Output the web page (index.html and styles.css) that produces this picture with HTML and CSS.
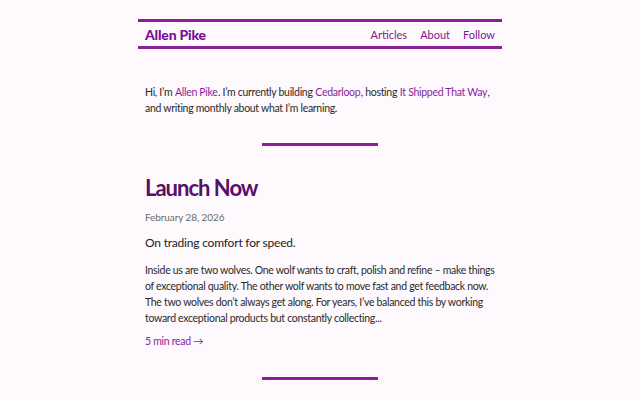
FILE: index.html
```html
<!DOCTYPE html>
<html>
<head>
<meta charset="utf-8">
<link rel="stylesheet" href="styles.css">
</head>
<body>
<div class="page">
  <header class="site-header">
    <a class="brand" href="#">Allen Pike</a>
    <nav class="nav">
      <a href="#">Articles</a>
      <a href="#">About</a>
      <a href="#">Follow</a>
    </nav>
  </header>
  <p class="intro">Hi, I’m <a href="#">Allen Pike</a>. I’m currently building <a href="#">Cedarloop</a>, hosting <a href="#">It Shipped That Way</a>, and writing monthly about what I’m learning.</p>
  <hr class="divider">
  <article class="post">
    <h1 class="title">Launch Now</h1>
    <div class="date">February 28, 2026</div>
    <p class="subtitle">On trading comfort for speed.</p>
    <p class="excerpt">Inside us are two wolves. One wolf wants to craft, polish and refine – make things of exceptional quality. The other wolf wants to move fast and get feedback now. The two wolves don’t always get along. For years, I’ve balanced this by working toward exceptional products but constantly collecting...</p>
    <a class="more" href="#">5 min read →</a>
  </article>
  <hr class="divider divider-end">
</div>
</body>
</html>
```
FILE: styles.css
```css
html, body {
  margin: 0;
  padding: 0;
  background: #fdf9fc;
}
body {
  font-family: "Lato", "Open Sans", sans-serif;
  color: #2a2a2a;
}
a {
  color: #8a1e9c;
  text-decoration: none;
}
.page {
  width: 364px;
  margin: 0 auto;
  padding-top: 19px;
}
.site-header {
  display: flex;
  justify-content: space-between;
  align-items: center;
  height: 24px;
  border-top: 3px solid #8e1a9e;
  border-bottom: 3px solid #8e1a9e;
  padding: 0 7px;
}
.brand {
  font-weight: 900;
  font-size: 14px;
  letter-spacing: -0.2px;
  color: #7a0f98;
}
.nav {
  display: flex;
  gap: 13px;
  font-size: 11px;
}
.nav a {
  color: #7e1a8e;
}
.intro {
  margin: 36px 7px 0;
  font-size: 10.5px;
  letter-spacing: -0.3px;
  line-height: 15.7px;
}
.intro a {
  padding: 0 0.4px;
}
.divider {
  width: 116px;
  height: 3px;
  border: 0;
  background: #8e1a9e;
  margin: 27px auto 0;
}
.post {
  padding: 0 7px;
}
.title {
  margin: 28px 0 0;
  font-size: 22px;
  font-weight: 700;
  letter-spacing: -1px;
  color: #570f68;
  line-height: 28px;
}
.date {
  margin-top: 9px;
  font-size: 10px;
  line-height: 13px;
  letter-spacing: -0.1px;
  color: #6a6a6a;
}
.subtitle {
  margin: 11px 0 0;
  font-size: 12px;
  line-height: 16px;
  letter-spacing: -0.2px;
  color: #222;
}
.excerpt {
  margin: 12px 0 0;
  font-size: 10.5px;
  letter-spacing: -0.3px;
  line-height: 15.7px;
}
.more {
  display: block;
  margin-top: 8px;
  font-size: 10.5px;
  letter-spacing: -0.3px;
  line-height: 14px;
}
.divider-end {
  margin-top: 29px;
}
```
